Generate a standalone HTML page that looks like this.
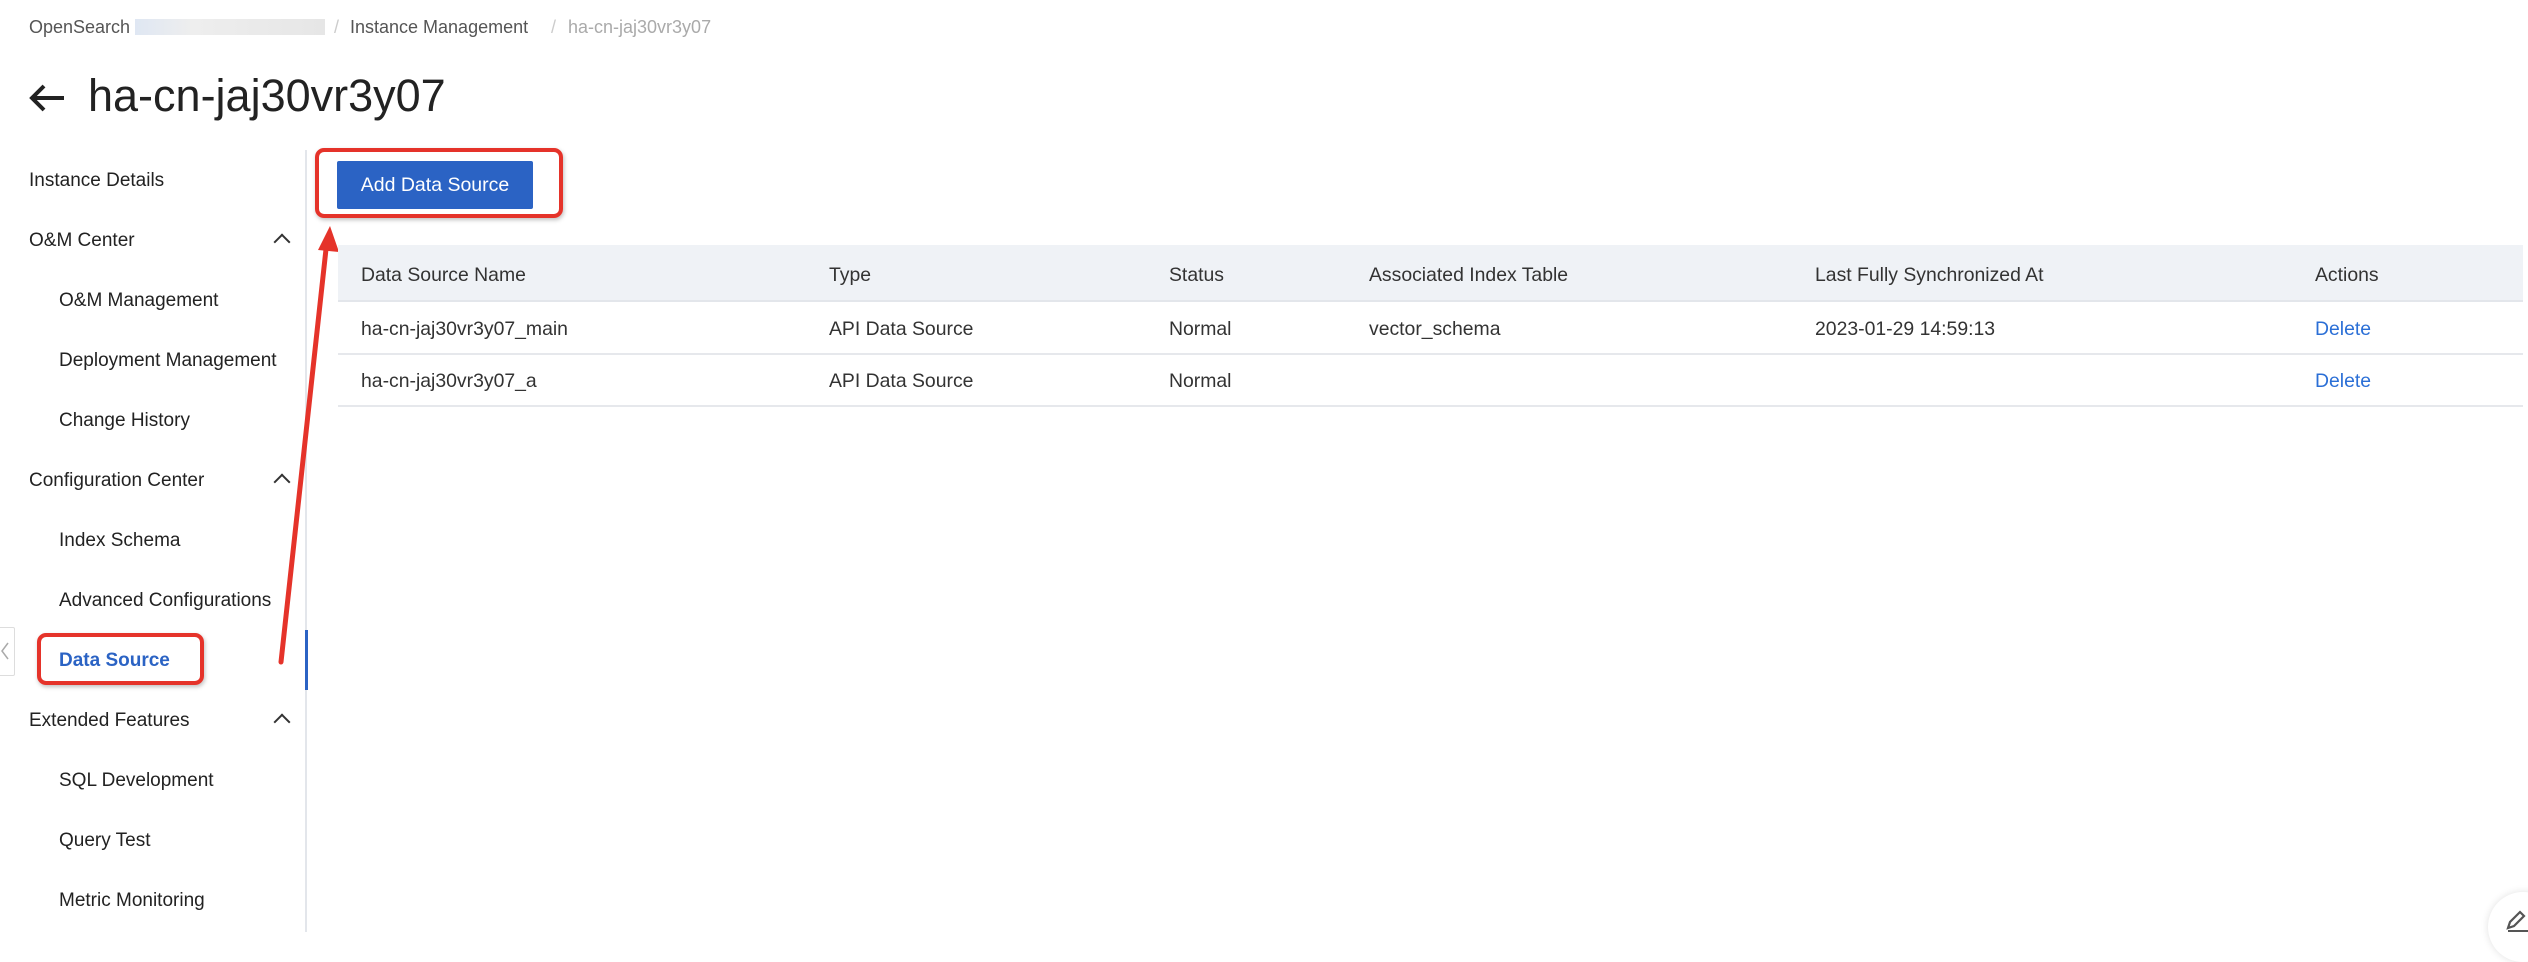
<!DOCTYPE html>
<html><head><meta charset="utf-8"><style>
*{margin:0;padding:0;box-sizing:border-box}
body{width:2528px;height:932px;position:relative;overflow:hidden;background:#fff;font-family:"Liberation Sans",Arial,sans-serif;color:#333}
.a{position:absolute;white-space:nowrap}
.bc{top:17px;font-size:18px;color:#555}
.nav{font-size:19px;color:#222;line-height:20px}
.th{top:264px;font-size:19.4px;color:#333}
.r1{top:318px;font-size:19.4px;color:#333}
.r2{top:370px;font-size:19.4px;color:#333}
.lnk{color:#2b6fd6}
.chev{position:absolute;left:276px;width:12px;height:12px;border-left:2px solid #333;border-top:2px solid #333;transform:rotate(45deg)}
</style></head><body>
<div class="a bc" style="left:29px">OpenSearch <span style="display:inline-block;width:190px;height:16px;background:linear-gradient(90deg,#dfe7f3,#eee 30%,#e6e6e6);vertical-align:-2px"></span></div>
<div class="a bc" style="left:334px;color:#ccc">/</div>
<div class="a bc" style="left:350px">Instance Management</div>
<div class="a bc" style="left:551px;color:#ccc">/</div>
<div class="a bc" style="left:568px;color:#aaa">ha-cn-jaj30vr3y07</div>
<svg class="a" style="left:28px;top:83px" width="38" height="30" viewBox="0 0 38 30"><path d="M36 15H5M16 3L4 15l12 12" fill="none" stroke="#222" stroke-width="4"/></svg>
<div class="a" style="left:88px;top:70px;font-size:45px;color:#222">ha-cn-jaj30vr3y07</div>

<div class="a" style="left:305px;top:150px;width:2px;height:782px;background:#e3e6eb"></div>
<div class="a" style="left:305px;top:630px;width:3px;height:60px;background:#2b63c4"></div>

<div class="a nav" style="left:29px;top:171px">Instance Details</div>
<div class="a nav" style="left:29px;top:231px">O&amp;M Center</div><div class="chev" style="top:236px"></div>
<div class="a nav" style="left:59px;top:291px">O&amp;M Management</div>
<div class="a nav" style="left:59px;top:351px">Deployment Management</div>
<div class="a nav" style="left:59px;top:411px">Change History</div>
<div class="a nav" style="left:29px;top:471px">Configuration Center</div><div class="chev" style="top:476px"></div>
<div class="a nav" style="left:59px;top:531px">Index Schema</div>
<div class="a nav" style="left:59px;top:591px">Advanced Configurations</div>
<div class="a nav" style="left:59px;top:651px;color:#2b63c4;font-weight:bold">Data Source</div>
<div class="a nav" style="left:29px;top:711px">Extended Features</div><div class="chev" style="top:716px"></div>
<div class="a nav" style="left:59px;top:771px">SQL Development</div>
<div class="a nav" style="left:59px;top:831px">Query Test</div>
<div class="a nav" style="left:59px;top:891px">Metric Monitoring</div>

<div class="a" style="left:-2px;top:627px;width:17px;height:49px;border:1px solid #ddd;background:#fff;border-radius:2px"></div>
<svg class="a" style="left:0;top:642px" width="10" height="18"><path d="M8 1L2 9l6 8" fill="none" stroke="#aaa" stroke-width="1.5"/></svg>

<div class="a" style="left:37px;top:633px;width:167px;height:52px;border:4px solid #e5332a;border-radius:9px;box-shadow:1px 2px 4px rgba(0,0,0,.25)"></div>

<div class="a" style="left:337px;top:161px;width:196px;height:48px;background:#2b63c4;border-radius:2px;color:#fff;font-size:19.5px;text-align:center;line-height:48px">Add Data Source</div>
<div class="a" style="left:315px;top:148px;width:248px;height:70px;border:4px solid #e5332a;border-radius:9px;box-shadow:1px 2px 4px rgba(0,0,0,.25)"></div>

<svg class="a" style="left:0;top:0" width="400" height="700"><path d="M281 662L327 240" stroke="#e5332a" stroke-width="5" stroke-linecap="round"/><path d="M330 226L318 250L339 252Z" fill="#e5332a"/></svg>

<div class="a" style="left:338px;top:245px;width:2185px;height:57px;background:#eff2f6;border-bottom:2px solid #e3e6eb"></div>
<div class="a" style="left:338px;top:353px;width:2185px;height:2px;background:#e6e8ec"></div>
<div class="a" style="left:338px;top:405px;width:2185px;height:2px;background:#e6e8ec"></div>
<div class="a th" style="left:361px">Data Source Name</div>
<div class="a th" style="left:829px">Type</div>
<div class="a th" style="left:1169px">Status</div>
<div class="a th" style="left:1369px">Associated Index Table</div>
<div class="a th" style="left:1815px">Last Fully Synchronized At</div>
<div class="a th" style="left:2315px">Actions</div>
<div class="a r1" style="left:361px">ha-cn-jaj30vr3y07_main</div>
<div class="a r1" style="left:829px">API Data Source</div>
<div class="a r1" style="left:1169px">Normal</div>
<div class="a r1" style="left:1369px">vector_schema</div>
<div class="a r1" style="left:1815px">2023-01-29 14:59:13</div>
<div class="a r1 lnk" style="left:2315px">Delete</div>
<div class="a r2" style="left:361px">ha-cn-jaj30vr3y07_a</div>
<div class="a r2" style="left:829px">API Data Source</div>
<div class="a r2" style="left:1169px">Normal</div>
<div class="a r2 lnk" style="left:2315px">Delete</div>

<div class="a" style="left:2488px;top:892px;width:70px;height:70px;border-radius:50%;background:#fff;box-shadow:0 0 8px rgba(0,0,0,.12)"></div>
<svg class="a" style="left:2505px;top:908px" width="23" height="24"><path d="M3 20l2-6L15 4l4 4L9 18z" fill="none" stroke="#555" stroke-width="2.2"/><path d="M3 23h20" stroke="#555" stroke-width="2"/></svg>
</body></html>
